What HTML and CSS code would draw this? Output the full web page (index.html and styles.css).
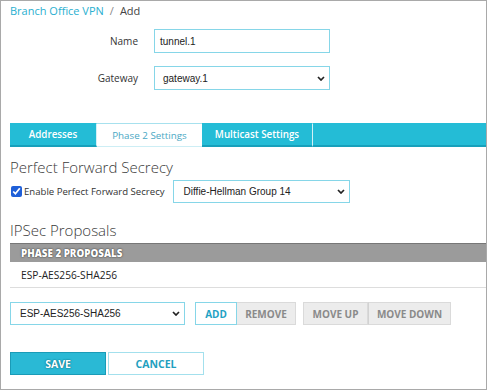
FILE: index.html
```html
<!DOCTYPE html>
<html>
<head>
<meta charset="utf-8">
<link rel="stylesheet" href="styles.css">
</head>
<body>
<div class="frame">
  <div class="crumbs"><span class="crumb-link">Branch Office VPN</span><span class="sep">/</span><span>Add</span></div>

  <div class="form">
    <label class="lbl">Name</label>
    <div class="field input">tunnel.1</div>
    <label class="lbl">Gateway</label>
    <div class="field select sel-gw"><span>gateway.1</span><svg class="chev" width="8" height="5" viewBox="0 0 8 5"><path d="M1 1l3 3 3-3" stroke="#222" stroke-width="1.7" fill="none"/></svg></div>
  </div>

  <div class="tabs">
    <div class="tab tab-addr">Addresses</div>
    <div class="tab tab-active">Phase 2 Settings</div>
    <div class="tab tab-multi">Multicast Settings</div>
    <div class="tab tab-fill"></div>
  </div>

  <h2 class="heading h-pfs">Perfect Forward Secrecy</h2>
  <div class="pfs-row">
    <input class="check" type="checkbox" checked>
    <span class="pfs-label">Enable Perfect Forward Secrecy</span>
    <div class="field select sel-dh"><span>Diffie-Hellman Group 14</span><svg class="chev" width="8" height="5" viewBox="0 0 8 5"><path d="M1 1l3 3 3-3" stroke="#222" stroke-width="1.7" fill="none"/></svg></div>
  </div>

  <h2 class="heading h-ipsec">IPSec Proposals</h2>
  <div class="table">
    <div class="thead">PHASE 2 PROPOSALS</div>
    <div class="trow">ESP-AES256-SHA256</div>
  </div>

  <div class="controls">
    <div class="field select sel-prop"><span>ESP-AES256-SHA256</span><svg class="chev" width="8" height="5" viewBox="0 0 8 5"><path d="M1 1l3 3 3-3" stroke="#222" stroke-width="1.7" fill="none"/></svg></div>
    <div class="btn btn-add">ADD</div>
    <div class="btn btn-gray btn-remove">REMOVE</div>
    <div class="btn btn-gray btn-up">MOVE UP</div>
    <div class="btn btn-gray btn-down">MOVE DOWN</div>
  </div>

  <div class="actions">
    <div class="btn btn-save">SAVE</div>
    <div class="btn btn-cancel">CANCEL</div>
  </div>
</div>
</body>
</html>
```
FILE: styles.css
```css
* { box-sizing: border-box; }
body {
  margin: 0;
  background: #fff;
  font-family: "Open Sans", sans-serif;
  color: #333;
}
.frame {
  width: 487px;
  height: 390px;
  border: 1px solid #a9a9a9;
  padding: 2px 0 0 9px;
  display: flex;
  flex-direction: column;
}
.crumbs {
  font-size: 11px;
  line-height: 16px;
  color: #444;
  display: flex;
}
.crumb-link { color: #2aafd0; }
.sep { margin: 0 6px; color: #888; }

.form {
  margin-top: 10px;
  display: grid;
  grid-template-columns: 128px 176px;
  column-gap: 16px;
  row-gap: 13px;
  align-items: center;
}
.lbl {
  text-align: right;
  font-size: 10px;
  color: #333;
}
.field {
  height: 24px;
  border: 1px solid #86d6e8;
  font-family: "Liberation Sans", Arial, sans-serif;
  font-size: 10px;
  color: #222;
  display: flex;
  align-items: center;
  background: #fff;
}
.input { padding: 0 5px; }
.select {
  justify-content: space-between;
  padding: 0 4px 0 8px;
}
.chev { display: block; }

.tabs {
  margin-top: 33px;
  height: 24px;
  display: flex;
}
.tab {
  height: 24px;
  display: flex;
  align-items: center;
  justify-content: center;
  font-size: 9.8px;
  font-weight: 600;
  color: #fff;
  background: #24bcd6;
  border-bottom: 2px solid #17a0bb;
  border-top: 1px solid #24bcd6;
  border-right: 1px solid #d3f0f6;
}
.tab-addr { width: 87px; }
.tab-active {
  width: 105px;
  background: #fff;
  color: #4aa8c4;
  font-weight: 400;
  border-top: 1px solid #a7e1ee;
  border-bottom: 1px solid #cdeef5;
  border-right: none;
}
.tab-multi { width: 111px; }
.tab-fill { flex: 1; border-right: none; }

.heading {
  margin: 0;
  font-size: 15px;
  line-height: 20px;
  font-weight: 300;
  color: #3a3a3a;
}
.h-pfs { margin-top: 10px; }
.h-ipsec { margin-top: 17px; }

.pfs-row {
  margin-top: 3px;
  display: flex;
  align-items: center;
}
.check {
  width: 11px;
  height: 11px;
  margin: 0 2px 0 1px;
  accent-color: #1f5fd8;
}
.pfs-label {
  font-size: 9.6px;
  color: #333;
}
.sel-dh {
  width: 177px;
  height: 23px;
  margin-left: 8px;
  padding-left: 10px;
}

.table { margin-top: 3px; }
.thead {
  height: 19px;
  background: #9b9b9b;
  border-top: 1px solid #777;
  padding-left: 11px;
  display: flex;
  align-items: center;
  font-size: 9.8px;
  font-weight: 800;
  color: #fff;
  text-shadow: 0 0 2px #444, 0 0 1px #444;
}
.trow {
  height: 26px;
  border-bottom: 1px solid #ddd;
  padding-left: 11px;
  display: flex;
  align-items: center;
  font-size: 10.2px;
  color: #222;
}

.controls {
  margin-top: 14px;
  display: flex;
  height: 23px;
}
.sel-prop { width: 175px; height: 23px; padding-left: 9px; }
.btn {
  height: 23px;
  display: flex;
  align-items: center;
  justify-content: center;
  font-size: 10px;
  font-weight: 700;
}
.btn-add {
  margin-left: 10px;
  width: 42px;
  border: 1px solid #86d6e8;
  color: #1fa2c4;
  background: #fff;
}
.btn-gray {
  background: #ececec;
  border: 1px solid #dadada;
  color: #8a8a8a;
}
.btn-remove { width: 59px; border-left: none; }
.btn-up { width: 65px; margin-left: 7px; }
.btn-down { width: 83px; border-left: 1px solid #d2d2d2; }

.actions {
  margin-top: 27px;
  display: flex;
  gap: 2px;
}
.btn-save {
  width: 96px;
  background: #2ab9d5;
  border: 1px solid #1a9bb7;
  color: #fff;
  font-size: 10.5px;
  text-shadow: 0 0 1px #0c6f84, 0 0 2px #0c6f84;
}
.btn-cancel {
  width: 96px;
  background: #fff;
  border: 1px solid #a3e0ed;
  color: #1f9fc0;
  font-size: 10.5px;
}
```
